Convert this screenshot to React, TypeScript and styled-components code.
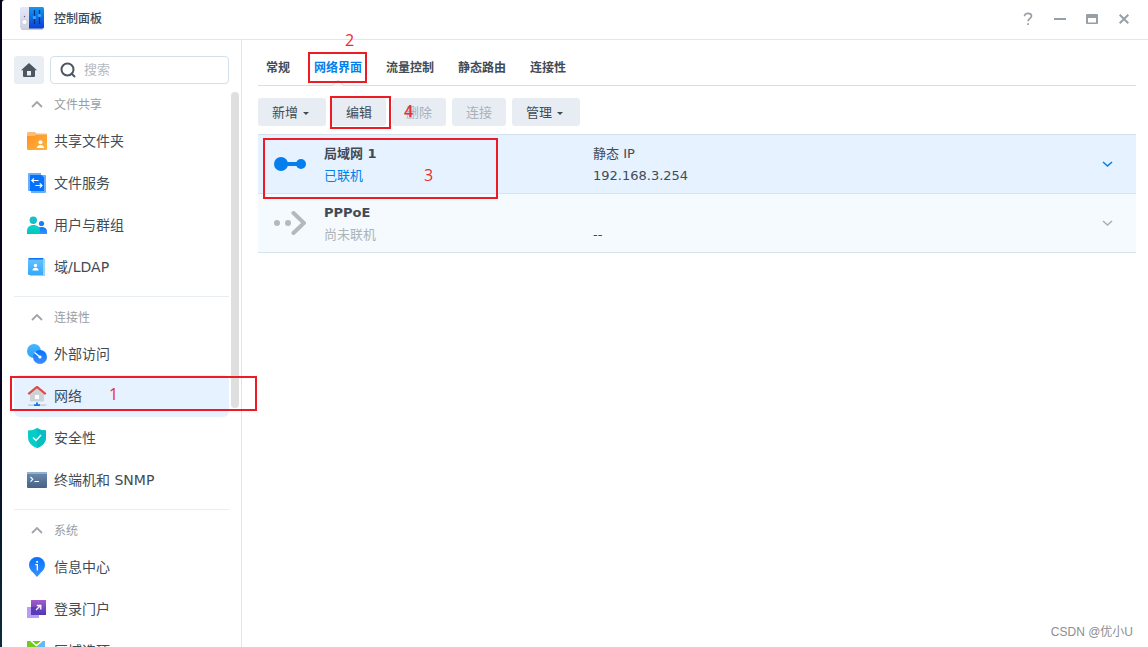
import React from "react";
import styled, { createGlobalStyle, css } from "styled-components";

const GlobalStyle = createGlobalStyle`
  * { box-sizing: border-box; }
  html, body { margin: 0; height: 100%; }
  body {
    overflow: hidden;
    background: linear-gradient(#04041c 60%, #0c2a3e);
    color: #414b55;
    font-family: "DejaVu Sans", "Noto Sans CJK SC", sans-serif;
    font-size: 13px;
  }
  button, input { font: inherit; color: inherit; }
  svg { display: block; flex: none; }
`;

const bare = css`
  border: 0;
  padding: 0;
  background: none;
  cursor: pointer;
`;

const Window = styled.div`
  position: relative;
  display: flex;
  flex-direction: column;
  height: 100vh;
  margin-left: 2px;
  border-top-left-radius: 3px;
  overflow: hidden;
  background: #fff;
`;

const TitleBar = styled.header`
  display: flex;
  align-items: center;
  height: 40px;
  flex: none;
  padding: 0 8px 2px 18px;
  border-bottom: 1px solid #e4e6e8;
`;

const Title = styled.h1`
  flex: 1;
  margin: 0 0 0 10px;
  font-size: 12px;
  font-weight: 500;
  line-height: 18px;
`;

const WindowButton = styled.button`
  ${bare}
  display: grid;
  place-items: center;
  width: 32px;
  height: 32px;
`;

const Body = styled.div`
  display: flex;
  flex: 1;
  min-height: 0;
`;

const Sidebar = styled.aside`
  display: flex;
  flex-direction: column;
  flex: none;
  width: 240px;
  padding: 16px 2px 0 12px;
  border-right: 1px solid #e0e5ea;
`;

const SearchRow = styled.div`
  display: flex;
  gap: 6px;
  padding-right: 10px;
`;

const HomeButton = styled.button`
  ${bare}
  display: grid;
  place-items: center;
  width: 30px;
  height: 28px;
  border-radius: 3px;
  background: #e9eef5;
`;

const SearchBox = styled.label`
  display: flex;
  align-items: center;
  gap: 8px;
  flex: 1;
  min-width: 0;
  height: 28px;
  padding: 0 9px;
  border: 1px solid #d3dfe9;
  border-radius: 4px;
`;

const SearchInput = styled.input`
  flex: 1;
  min-width: 0;
  border: 0;
  padding: 0;
  outline: 0;
  background: none;
  line-height: 20px;
  &::placeholder { color: #b4babf; opacity: 1; }
`;

const NavArea = styled.div`
  display: flex;
  gap: 2px;
  flex: 1;
  min-height: 0;
`;

const NavList = styled.nav`
  flex: 1;
  overflow: hidden;
`;

const ScrollTrack = styled.div`
  width: 8px;
  padding-top: 8px;
`;

const ScrollThumb = styled.div`
  height: 57%;
  border-radius: 4px;
  background: #dfdfdf;
`;

const Group = styled.section`
  padding-bottom: 8px;
  border-bottom: 1px solid #e8edf2;
`;

const GroupHeader = styled.button`
  ${bare}
  display: flex;
  align-items: center;
  gap: 11px;
  width: 100%;
  height: 36px;
  padding: 4px 0 0 17px;
  color: #989da3;
  font-size: 12px;
`;

const Label = styled.span`
  padding-bottom: 2px;
`;

const NavItem = styled.a<{ $active?: boolean }>`
  display: flex;
  align-items: center;
  gap: 7px;
  height: 42px;
  padding-left: 13px;
  border-radius: 6px;
  background: ${(p) => (p.$active ? "#e6f2ff" : "transparent")};
  color: #414b55;
  font-size: 14px;
  text-decoration: none;
`;

const Main = styled.main`
  flex: 1;
  min-width: 0;
  padding: 0 12px 0 16px;
`;

const Tabs = styled.div`
  display: flex;
  gap: 24px;
  height: 46px;
  padding: 8px 8px 0;
  border-bottom: 1px solid #d6e0e8;
`;

const Tab = styled.button<{ $active?: boolean }>`
  ${bare}
  position: relative;
  height: 37px;
  font-size: 12px;
  font-weight: 700;
  color: ${(p) => (p.$active ? "#057feb" : "#414b55")};
`;

const Notch = styled.svg`
  position: absolute;
  left: 50%;
  bottom: -1px;
  margin-left: -7px;
`;

const Toolbar = styled.div`
  display: flex;
  gap: 6px;
  padding: 12px 0 8px;
`;

const ToolButton = styled.button`
  ${bare}
  display: flex;
  align-items: center;
  gap: 5px;
  height: 28px;
  padding: 0 14px;
  border-radius: 3px;
  background: #e8edf4;
  &:disabled { color: #a9b0b8; cursor: default; }
`;

const Caret = styled.span`
  border: 3px solid transparent;
  border-top-color: #414b55;
  border-bottom: 0;
  margin: 2px 3px 0 0;
`;

const List = styled.ul`
  margin: 0;
  padding: 0;
  list-style: none;
  border-top: 1px solid #d3e1ed;
`;

const Row = styled.li<{ $active?: boolean }>`
  display: grid;
  grid-template-columns: 50px 269px 1fr 24px;
  align-items: center;
  height: 59px;
  padding: 0 17px 0 16px;
  border-bottom: 1px solid #d8e4ed;
  background: ${(p) => (p.$active ? "#e6f2ff" : "#f5fafe")};
`;

const Cell = styled.div`
  padding-top: 2px;
  line-height: 22px;
  white-space: nowrap;
`;

const Line = styled.div<{ $tone?: "blue" | "muted" }>`
  height: 22px;
  color: ${(p) => (p.$tone === "blue" ? "#057feb" : p.$tone === "muted" ? "#aeb3b8" : "#414b55")};
`;

const Name = styled(Line)`
  font-weight: 700;
`;

const ExpandButton = styled.button`
  ${bare}
  display: grid;
  place-items: center;
  height: 24px;
`;

const Frame = styled.div<{ $x: number; $y: number; $w: number; $h: number }>`
  position: absolute;
  left: ${(p) => p.$x}px;
  top: ${(p) => p.$y}px;
  width: ${(p) => p.$w}px;
  height: ${(p) => p.$h}px;
  border: 2px solid #ed1c24;
  pointer-events: none;
`;

const Step = styled.span<{ $x: number; $y: number; $bold?: boolean }>`
  position: absolute;
  left: ${(p) => p.$x}px;
  top: ${(p) => p.$y}px;
  color: #ea2c34;
  font-family: "Open Sans", sans-serif;
  font-size: 16px;
  font-weight: ${(p) => (p.$bold ? 600 : 400)};
  line-height: 20px;
  pointer-events: none;
`;

const Watermark = styled.span`
  position: absolute;
  right: 15px;
  bottom: 6px;
  color: #8e8e8e;
  font-family: "Liberation Sans", "Noto Sans CJK SC", sans-serif;
  font-size: 12px;
  line-height: 18px;
`;

const Gradient = ({ id, from, to, diagonal }: { id: string; from: string; to: string; diagonal?: boolean }) => (
  <linearGradient id={id} x1="0" y1="0" x2={diagonal ? "1" : "0"} y2="1">
    <stop stopColor={from} />
    <stop offset="1" stopColor={to} />
  </linearGradient>
);

const Icon = ({ children }: { children: React.ReactNode }) => (
  <svg width="20" height="20" viewBox="0 0 20 20" aria-hidden="true">{children}</svg>
);

const AppIcon = () => (
  <svg width="24" height="23" viewBox="0 0 24 23" aria-hidden="true">
    <defs>
      <Gradient id="appBlue" from="#0f9bf0" to="#0a3fd8" />
      <Gradient id="appGrey" from="#e4e7f8" to="#d0d2e2" />
    </defs>
    <rect x="1" y="2" width="22" height="21" rx="1.5" fill="#c9cbd6" />
    <path d="M1.5 0H9v21.500H1.500A1.500 1.500 0 0 1 0 20V1.500A1.500 1.500 0 0 1 1.500 0Z" fill="url(#appGrey)" />
    <path d="M9 0h13.500A1.500 1.500 0 0 1 24 1.500V20a1.500 1.500 0 0 1-1.500 1.500H9Z" fill="url(#appBlue)" />
    <circle cx="4.500" cy="15" r="2.600" fill="#fff" stroke="#b9bccb" strokeWidth=".6" />
    <circle cx="4.500" cy="9.500" r=".7" fill="#5d6478" />
    <path d="M14.500 3v14M19.500 3v14" stroke="#0b2f70" strokeWidth="1.200" />
    <circle cx="14.500" cy="10.500" r="1.700" fill="#3aa2ff" />
    <circle cx="19.500" cy="8.500" r="1.700" fill="#3aa2ff" />
  </svg>
);

const FolderIcon = () => (
  <Icon>
    <defs><Gradient id="folder" from="#ff9024" to="#ffb53c" diagonal /></defs>
    <path d="M0 2a1 1 0 0 1 1-1h7l1.500 1.500H19a1 1 0 0 1 1 1V12H0Z" fill="#f9bd78" />
    <path d="M0 5h7.500L9 4h11v14a1 1 0 0 1-1 1H1a1 1 0 0 1-1-1Z" fill="url(#folder)" />
    <circle cx="13.500" cy="11.300" r="2" fill="#fff" />
    <path d="M10 17c0-2 1.500-3 3.500-3s3.500 1 3.500 3Z" fill="#fff" />
  </Icon>
);

const FileServiceIcon = () => (
  <Icon>
    <path d="M1 1a1 1 0 0 1 1-1h12v2h4a1 1 0 0 1 1 1v16a1 1 0 0 1-1 1H4v-2H2a1 1 0 0 1-1-1Z" fill="#6aaefc" />
    <path d="M3 2h11.500L17 4.500V18H3Z" fill="#0672fc" />
    <path d="M11.500 7.500H5M7 5.300 4.800 7.500 7 9.700M8.500 12.500H15M12.800 10.300l2.200 2.200-2.200 2.200" fill="none" stroke="#fff" strokeWidth="1.200" />
  </Icon>
);

const UsersIcon = () => (
  <Icon>
    <defs>
      <Gradient id="userTeal" from="#0cd3d0" to="#03c5bd" />
      <Gradient id="userBlue" from="#0a78ff" to="#3d90ff" />
    </defs>
    <circle cx="14.500" cy="8.500" r="2.600" fill="#1680fb" />
    <path d="M11 19v-6.500q1.500-.5 3.500-.5c3.500 0 5.500 1.500 5.500 4.500V19Z" fill="url(#userBlue)" />
    <circle cx="6.300" cy="5.300" r="3.700" fill="#19bec8" />
    <path d="M0 19v-3c0-3.800 2.500-6 6.500-6s6.500 2.200 6.500 6v3Z" fill="url(#userTeal)" />
  </Icon>
);

const DomainIcon = () => (
  <Icon>
    <defs><Gradient id="ldap" from="#62c0ff" to="#35a8fd" /></defs>
    <path d="M3 2h14v17H3Z" fill="#8fd0fd" />
    <path d="M1.500 1h15v3h-15Z" fill="#0874f8" />
    <path d="M16 2h2v17H4v-1h12Z" fill="#97d3fd" />
    <path d="M1 2.500h15V18H2a1 1 0 0 1-1-1Z" fill="url(#ldap)" />
    <circle cx="8.500" cy="8.500" r="1.700" fill="#fff" />
    <path d="M5.500 13.500c0-1.900 1-2.800 3-2.800s3 .9 3 2.800Z" fill="#fff" />
  </Icon>
);

const ExternalIcon = () => (
  <Icon>
    <defs>
      <Gradient id="extLight" from="#46b6ff" to="#2aa2fb" />
      <Gradient id="extBlue" from="#0870fb" to="#3d90ff" />
    </defs>
    <circle cx="7" cy="7" r="7" fill="url(#extLight)" />
    <circle cx="13" cy="13" r="7" fill="url(#extBlue)" />
    <path d="M7.500 8.500 13 13" stroke="#fff" strokeWidth="1.300" />
    <circle cx="13" cy="13" r="1.600" fill="#fff" />
  </Icon>
);

const NetworkIcon = () => (
  <Icon>
    <path d="M3 8.500 10 2l7 6.500V15a.5.5 0 0 1-.5.5h-13A.5.500 0 0 1 3 15Z" fill="#ced2d6" />
    <rect x="8" y="9" width="4" height="4" fill="#fff" />
    <path d="M1.300 8.200 10 .9l8.700 7.300" fill="none" stroke="#d84f4a" strokeWidth="2.200" />
    <path d="M1 19.200h18" stroke="#c9cfd5" strokeWidth="1.600" />
    <path d="M9 16.500h2v1.700h2V20H7v-1.800h2Z" fill="#0b7cf8" />
  </Icon>
);

const ShieldIcon = () => (
  <Icon>
    <path d="M10 0c2.500 1.700 5.500 2.500 9 2.500V9c0 5.500-3.500 9-9 11C4.500 18 1 14.500 1 9V2.500C4.500 2.500 7.500 1.700 10 0Z" fill="#05cdc9" />
    <path d="M10 0c2.500 1.700 5.500 2.500 9 2.500V9c0 5.500-3.500 9-9 11Z" fill="#04bfc4" />
    <path d="m6 9.500 3 3 5-5.500" fill="none" stroke="#fff" strokeWidth="1.500" />
  </Icon>
);

const TerminalIcon = () => (
  <Icon>
    <defs><Gradient id="term" from="#6c8db0" to="#466184" /></defs>
    <rect y="2" width="20" height="16" rx="1" fill="url(#term)" />
    <path d="M0 4V3a1 1 0 0 1 1-1h18a1 1 0 0 1 1 1v1Z" fill="#8db1cf" />
    <path d="m3.500 7 2.300 2.300-2.300 2.300M7.500 11.500H12" fill="none" stroke="#fff" strokeWidth="1.200" />
  </Icon>
);

const InfoIcon = () => (
  <Icon>
    <defs><Gradient id="info" from="#0572fb" to="#3a91ff" /></defs>
    <path d="M10 0a8 8 0 0 1 8 8c0 3.500-1.800 5.500-4 7.500L10 20l-4-4.500C3.800 13.500 2 11.500 2 8a8 8 0 0 1 8-8Z" fill="url(#info)" />
    <path d="M9.300 4h1.700v1.700H9.300Z" fill="#fff" />
    <path d="M8.300 7.600h2v6" fill="none" stroke="#fff" strokeWidth="1.300" />
  </Icon>
);

const PortalIcon = () => (
  <Icon>
    <defs><Gradient id="portal" from="#a45cc8" to="#4f35b8" /></defs>
    <path d="M4 1h15v15H4Z" fill="url(#portal)" />
    <path d="M0 8h12v11H0Z" fill="#b79df5" />
    <path d="M4 8h8v8H4Z" fill="#5a3bb8" />
    <path d="m9 11 4.500-4.500M9.800 6.500h4v4" fill="none" stroke="#fff" strokeWidth="1.300" />
  </Icon>
);

const RegionIcon = () => (
  <Icon>
    <path d="M0 0h18v18H0Z" fill="#72cb1c" />
    <path d="M18 0v9l-5 3-2.500-7L16 0Z" fill="#5fb9fb" />
    <path d="m4 0 5.500 4.500L15 0" fill="none" stroke="#fff" strokeWidth="1.500" />
  </Icon>
);

const Chevron = ({ up, color }: { up?: boolean; color: string }) => (
  <svg width="12" height="12" viewBox="0 0 12 12" aria-hidden="true">
    <path d={up ? "M1 9 6 4l5 5" : "M2 4l4.500 4L11 4"} fill="none" stroke={color} strokeWidth={up ? 1.8 : 1.6} />
  </svg>
);

const ConnectedIcon = () => (
  <svg width="32" height="32" viewBox="0 0 32 32" aria-hidden="true" fill="#057feb">
    <circle cx="7" cy="16" r="7" />
    <path d="M7 14h20v4H7Z" />
    <circle cx="27" cy="16" r="5" />
  </svg>
);

const DisconnectedIcon = () => (
  <svg width="32" height="32" viewBox="0 0 32 32" aria-hidden="true" fill="#b4b9be">
    <circle cx="3" cy="16" r="3" />
    <circle cx="14" cy="16" r="3" />
    <path d="M19.500 6 30 16 19.500 26" fill="none" stroke="#b4b9be" strokeWidth="4" strokeLinecap="round" />
  </svg>
);

const groups = [
  {
    name: "文件共享",
    items: [
      ["共享文件夹", FolderIcon],
      ["文件服务", FileServiceIcon],
      ["用户与群组", UsersIcon],
      ["域/LDAP", DomainIcon],
    ],
  },
  {
    name: "连接性",
    items: [
      ["外部访问", ExternalIcon],
      ["网络", NetworkIcon],
      ["安全性", ShieldIcon],
      ["终端机和 SNMP", TerminalIcon],
    ],
  },
  {
    name: "系统",
    items: [
      ["信息中心", InfoIcon],
      ["登录门户", PortalIcon],
      ["区域选项", RegionIcon],
    ],
  },
] as { name: string; items: [string, React.FC][] }[];

const tabs = ["常规", "网络界面", "流量控制", "静态路由", "连接性"];

const tools = [
  { label: "新增", menu: true },
  { label: "编辑" },
  { label: "删除", disabled: true },
  { label: "连接", disabled: true },
  { label: "管理", menu: true },
];

export default function App() {
  return (
    <>
      <GlobalStyle />
      <Window>
        <TitleBar>
          <AppIcon />
          <Title>控制面板</Title>
          <WindowButton aria-label="帮助">
            <svg width="12" height="14" viewBox="0 0 12 14" fill="none" stroke="#979fa7" strokeWidth="1.700">
              <path d="M2.500 4.200C2.500 2.300 3.900 1.400 6 1.400s3.500 1 3.500 2.700C9.500 6.400 6.100 6.500 6.100 9.300M6.100 11.200v1.800" />
            </svg>
          </WindowButton>
          <WindowButton aria-label="最小化">
            <svg width="12" height="12" viewBox="0 0 12 12"><path d="M0 5h12v2H0Z" fill="#979fa7" /></svg>
          </WindowButton>
          <WindowButton aria-label="最大化">
            <svg width="12" height="10" viewBox="0 0 12 10">
              <path fillRule="evenodd" d="M1 0h10a1 1 0 0 1 1 1v8a1 1 0 0 1-1 1H1a1 1 0 0 1-1-1V1a1 1 0 0 1 1-1ZM2 4v4.500h8V4Z" fill="#979fa7" />
            </svg>
          </WindowButton>
          <WindowButton aria-label="关闭">
            <svg width="10" height="10" viewBox="0 0 10 10"><path d="m.7.7 8.600 8.600M9.300.7.700 9.300" stroke="#979fa7" strokeWidth="2" /></svg>
          </WindowButton>
        </TitleBar>

        <Body>
          <Sidebar>
            <SearchRow>
              <HomeButton aria-label="主页">
                <svg width="16" height="14" viewBox="0 0 16 14">
                  <path fillRule="evenodd" d="M8 0l8 7.200h-2V13a1 1 0 0 1-1 1H3a1 1 0 0 1-1-1V7.200H0ZM6 8v4.500h4V8Z" fill="#4b5661" />
                </svg>
              </HomeButton>
              <SearchBox>
                <svg width="16" height="16" viewBox="0 0 16 16" fill="none" stroke="#4b5661" strokeWidth="2">
                  <circle cx="7.500" cy="7.500" r="6" />
                  <path d="m11 11 4 4" />
                </svg>
                <SearchInput type="text" placeholder="搜索" aria-label="搜索" />
              </SearchBox>
            </SearchRow>
            <NavArea>
              <NavList>
                {groups.map((group) => (
                  <Group key={group.name}>
                    <GroupHeader>
                      <Chevron up color="#a0a5aa" />
                      <Label>{group.name}</Label>
                    </GroupHeader>
                    {group.items.map(([label, ItemIcon]) => (
                      <NavItem key={label} href="#" $active={label === "网络"}>
                        <ItemIcon />
                        <Label>{label}</Label>
                      </NavItem>
                    ))}
                  </Group>
                ))}
              </NavList>
              <ScrollTrack>
                <ScrollThumb />
              </ScrollTrack>
            </NavArea>
          </Sidebar>

          <Main>
            <Tabs role="tablist">
              {tabs.map((label) => {
                const active = label === "网络界面";
                return (
                  <Tab key={label} role="tab" aria-selected={active} $active={active}>
                    {label}
                    {active && (
                      <Notch width="14" height="7" viewBox="0 0 14 7">
                        <path d="M1 6.500 7 1l6 5.500" fill="#fff" stroke="#d3dde6" />
                      </Notch>
                    )}
                  </Tab>
                );
              })}
            </Tabs>
            <Toolbar>
              {tools.map((tool) => (
                <ToolButton key={tool.label} disabled={tool.disabled}>
                  <Label>{tool.label}</Label>
                  {tool.menu && <Caret />}
                </ToolButton>
              ))}
            </Toolbar>
            <List>
              <Row $active>
                <ConnectedIcon />
                <Cell>
                  <Name>局域网 1</Name>
                  <Line $tone="blue">已联机</Line>
                </Cell>
                <Cell>
                  <Line>静态 IP</Line>
                  <Line>192.168.3.254</Line>
                </Cell>
                <ExpandButton aria-label="展开局域网 1">
                  <Chevron color="#057feb" />
                </ExpandButton>
              </Row>
              <Row>
                <DisconnectedIcon />
                <Cell>
                  <Name>PPPoE</Name>
                  <Line $tone="muted">尚未联机</Line>
                </Cell>
                <Cell>
                  <Line />
                  <Line>--</Line>
                </Cell>
                <ExpandButton aria-label="展开 PPPoE">
                  <Chevron color="#a9aeb3" />
                </ExpandButton>
              </Row>
            </List>
          </Main>
        </Body>

        <Frame $x={8} $y={376} $w={247} $h={35} />
        <Frame $x={306} $y={52} $w={59} $h={31} />
        <Frame $x={261} $y={138} $w={235} $h={61} />
        <Frame $x={328} $y={96} $w={61} $h={33} />
        <Step $x={107} $y={384}>1</Step>
        <Step $x={343} $y={30}>2</Step>
        <Step $x={422} $y={165}>3</Step>
        <Step $x={402} $y={101} $bold>4</Step>
        <Watermark>CSDN @优小U</Watermark>
      </Window>
    </>
  );
}
